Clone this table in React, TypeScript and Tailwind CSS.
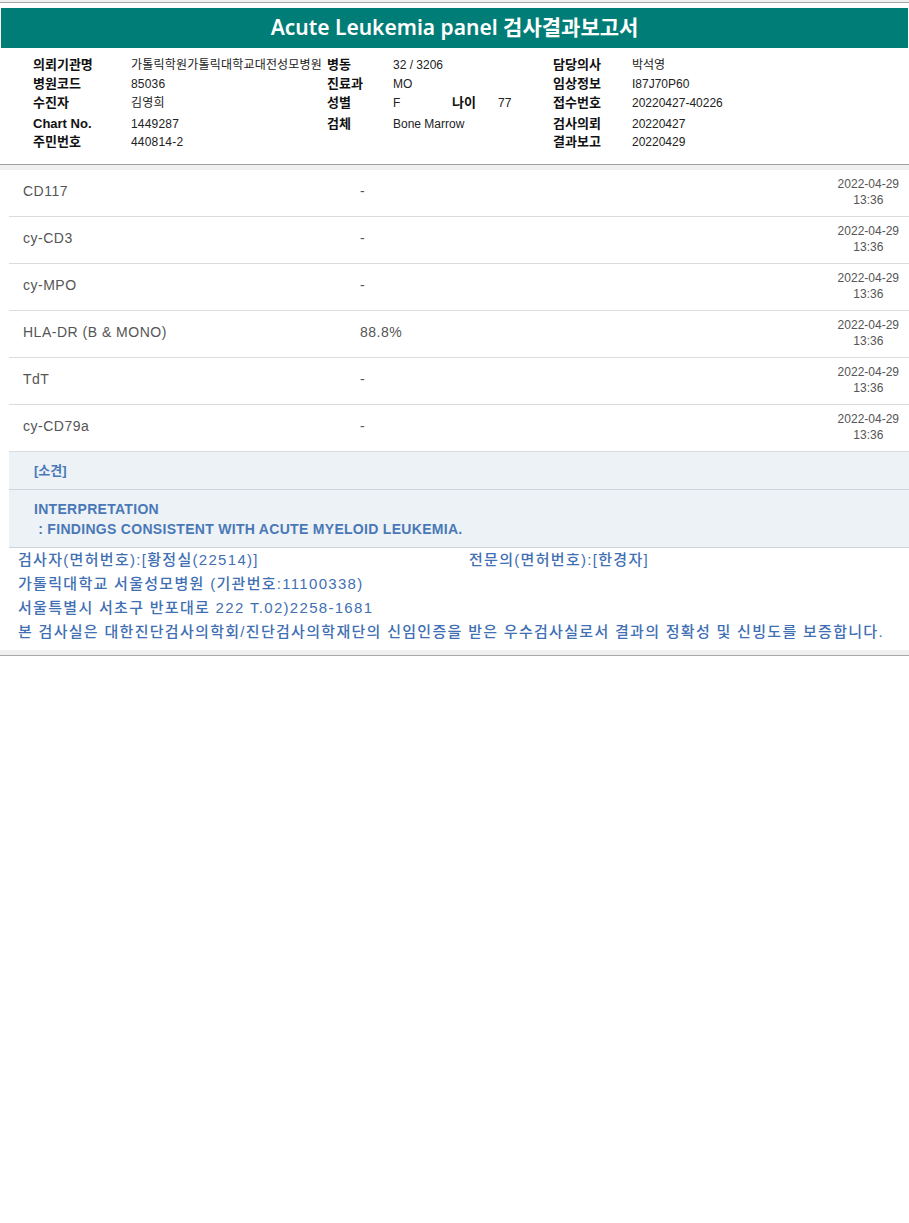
const KR = "font-['Liberation_Sans','Noto_Sans_CJK_KR',sans-serif]";

const info: [string, string][][] = [
  [['의뢰기관명', '가톨릭학원가톨릭대학교대전성모병원'], ['병동', '32 / 3206'], ['담당의사', '박석영']],
  [['병원코드', '85036'], ['진료과', 'MO'], ['임상정보', 'I87J70P60']],
  [['수진자', '김영희'], ['성별', 'F'], ['접수번호', '20220427-40226']],
  [['Chart No.', '1449287'], ['검체', 'Bone Marrow'], ['검사의뢰', '20220427']],
  [['주민번호', '440814-2'], ['', ''], ['결과보고', '20220429']],
];

const results = [
  { name: 'CD117', value: '-' },
  { name: 'cy-CD3', value: '-' },
  { name: 'cy-MPO', value: '-' },
  { name: 'HLA-DR (B & MONO)', value: '88.8%' },
  { name: 'TdT', value: '-' },
  { name: 'cy-CD79a', value: '-' },
];

const rowHeights = ['h-[19px]', 'h-[19px]', 'h-[19px]', 'h-[21px] pt-[2px]', 'h-[17px]'];

function InfoRow({ row, idx }: { row: [string, string][]; idx: number }) {
  return (
    <div className={`flex items-center ${rowHeights[idx]}`}>
      <div className="w-[98px] shrink-0 text-[13px] font-bold text-[#111]">{row[0][0]}</div>
      <div className="w-[196px] shrink-0 overflow-hidden whitespace-nowrap text-[12px] tracking-[0.2px] text-[#222]">{row[0][1]}</div>
      <div className="w-[66px] shrink-0 text-[13px] font-bold text-[#111]">{row[1][0]}</div>
      {idx === 2 ? (
        <div className="flex w-[160px] shrink-0 items-center">
          <span className="w-[59px] text-[12px] text-[#222]">F</span>
          <span className="w-[46px] text-[13px] font-bold text-[#111]">나이</span>
          <span className="text-[12px] text-[#222]">77</span>
        </div>
      ) : (
        <div className="w-[160px] shrink-0 text-[12px] text-[#222]">{row[1][1]}</div>
      )}
      <div className="w-[79px] shrink-0 text-[13px] font-bold text-[#111]">{row[2][0]}</div>
      <div className="text-[12px] text-[#222]">{row[2][1]}</div>
    </div>
  );
}

export default function App() {
  return (
    <div className={`w-[909px] bg-white ${KR}`}>
      <div className="h-[2px] bg-[#f0f0f0]" />
      <div className="h-[1px] bg-[#a8a8a8]" />
      <div className="h-[5px] bg-white" />
      <div className="mx-[1px] flex h-[40px] items-center justify-center bg-[#017d77]">
        <h1 className="font-['Noto_Sans','Noto_Sans_CJK_KR',sans-serif] text-[21px] font-semibold text-white">
          Acute Leukemia panel 검사결과보고서
        </h1>
      </div>

      <div className="pl-[33px] pt-[7px] pb-[14px]">
        {info.map((row, i) => (
          <InfoRow key={i} row={row} idx={i} />
        ))}
      </div>

      <div className="h-[1px] bg-[#a0a0a0]" />
      <div className="h-[5px] bg-[#f0f0f0]" />

      <div className="ml-[9px]">
        {results.map((r) => (
          <div key={r.name} className="flex h-[47px] items-center border-b border-[#dcdcdc] pl-[14px] pr-[10px]">
            <div className="w-[337px] pb-[4px] text-[14px] tracking-[0.5px] text-[#555]">{r.name}</div>
            <div className="flex-1 pb-[4px] text-[14px] tracking-[0.5px] text-[#555]">{r.value}</div>
            <div className="flex flex-col items-center pb-[2px] text-[12px] leading-[16px] text-[#555]">
              <span>2022-04-29</span>
              <span>13:36</span>
            </div>
          </div>
        ))}

        <div className="flex h-[38px] items-center border-b border-[#d0d4da] bg-[#edf2f7] pl-[25px]">
          <span className="text-[13px] font-bold text-[#4a78b6]">[소견]</span>
        </div>
        <div className="flex h-[58px] flex-col justify-center border-b border-[#d0d4da] bg-[#edf2f7] pl-[25px] text-[14px] font-bold leading-[20px] tracking-[0.3px] text-[#4a78b6]">
          <span>INTERPRETATION</span>
          <span>&nbsp;: FINDINGS CONSISTENT WITH ACUTE MYELOID LEUKEMIA.</span>
        </div>
      </div>

      <div className="pl-[18px] text-[15px] font-medium leading-[24px] tracking-[1.3px] text-[#3f70b3]">
        <div className="flex">
          <span className="w-[451px]">검사자(면허번호):[황정실(22514)]</span>
          <span>전문의(면허번호):[한경자]</span>
        </div>
        <div>가톨릭대학교 서울성모병원 (기관번호:11100338)</div>
        <div>서울특별시 서초구 반포대로 222 T.02)2258-1681</div>
        <div className="whitespace-nowrap">본 검사실은 대한진단검사의학회/진단검사의학재단의 신임인증을 받은 우수검사실로서 결과의 정확성 및 신빙도를 보증합니다.</div>
      </div>

      <div className="mt-[6px] h-[5px] bg-[#f0f0f0]" />
      <div className="h-[1px] bg-[#a8a8a8]" />
      <div className="h-[570px]" />
    </div>
  );
}
